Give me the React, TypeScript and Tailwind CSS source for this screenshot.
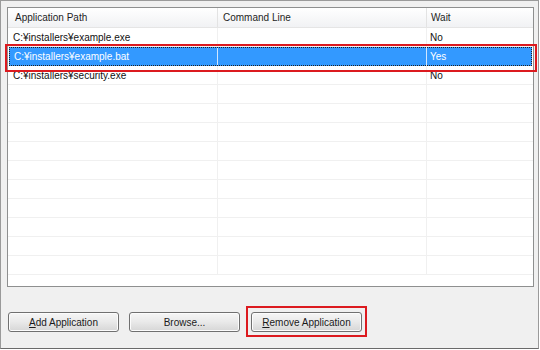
const ROWS = [
  { path: "C:¥installers¥example.exe", cmd: "", wait: "No", selected: false },
  { path: "C:¥installers¥example.bat", cmd: "", wait: "Yes", selected: true },
  { path: "C:¥installers¥security.exe", cmd: "", wait: "No", selected: false },
]

const EMPTY = 10

function Btn({ children, x }: { children: React.ReactNode; x?: string }) {
  return (
    <button
      className={`h-[20px] w-[111px] rounded-[3px] border border-[#707070] bg-gradient-to-b from-[#f6f6f6] via-[#e9e9e9] to-[#d6d6d6] text-[10px] text-[#1a1a1a] shadow-[inset_0_0_0_1px_#fcfcfc] ${x ?? ""}`}
    >
      {children}
    </button>
  )
}

export default function App() {
  return (
    <div
      className="relative w-[540px] h-[350px] overflow-hidden bg-white"
      style={{ fontFamily: '"Liberation Sans", Arial, sans-serif' }}
    >
      <div className="w-[539px] h-[349px] border border-[#9a9a9a] border-b-[#6a6a6a] bg-[#f0f0f0] pt-[6px] pl-[6px]">
        {/* list view */}
        <div className="w-[527px] h-[280px] border border-[#8e8f8f] bg-white overflow-hidden">
          <div className="flex h-[20px] border-b border-[#e5e5e5] bg-gradient-to-b from-white to-[#f1f2f4] text-[10px] text-[#1e1e1e]">
            <div className="w-[210px] border-r border-[#e3e3e3] pl-[7px] flex items-center">Application Path</div>
            <div className="w-[209px] border-r border-[#e3e3e3] pl-[5px] flex items-center">Command Line</div>
            <div className="flex-1 pl-[4px] flex items-center">Wait</div>
          </div>
          {ROWS.map((r) => (
            <div
              key={r.path}
              className={`flex h-[19px] text-[10px] ${
                r.selected
                  ? "bg-[#3399ff] text-white outline-1 outline-dotted outline-offset-[-1px] outline-[#222] mx-[1px]"
                  : "border-b border-[#f0f0f0] text-[#111]"
              }`}
            >
              <div className={`${r.selected ? "w-[209px]" : "w-[210px]"} border-r ${r.selected ? "border-[#cfe6ff]" : "border-[#f0f0f0]"} pl-[5px] flex items-center`}>
                {r.path}
              </div>
              <div className={`w-[209px] border-r ${r.selected ? "border-[#cfe6ff]" : "border-[#f0f0f0]"} pl-[5px] flex items-center`}>
                {r.cmd}
              </div>
              <div className="flex-1 pl-[3px] flex items-center">{r.wait}</div>
            </div>
          ))}
          {Array.from({ length: EMPTY }).map((_, i) => (
            <div key={i} className="flex h-[19px] border-b border-[#f0f0f0]">
              <div className="w-[210px] border-r border-[#f0f0f0]" />
              <div className="w-[209px] border-r border-[#f0f0f0]" />
              <div className="flex-1" />
            </div>
          ))}
        </div>

        {/* buttons */}
        <div className="flex gap-[10px] pl-[1px] pt-[25px]">
          <Btn>
            <span className="underline">A</span>dd Application
          </Btn>
          <Btn>Browse...</Btn>
          <Btn x="ml-[1px]">
            <span className="underline">R</span>emove Application
          </Btn>
        </div>
      </div>

      {/* red callouts */}
      <div className="absolute left-[5px] top-[44px] w-[532px] h-[28px] border-2 border-[#dc1a1f]" />
      <div className="absolute left-[246px] top-[306px] w-[121px] h-[31px] border-2 border-[#dc1a1f]" />
    </div>
  )
}
